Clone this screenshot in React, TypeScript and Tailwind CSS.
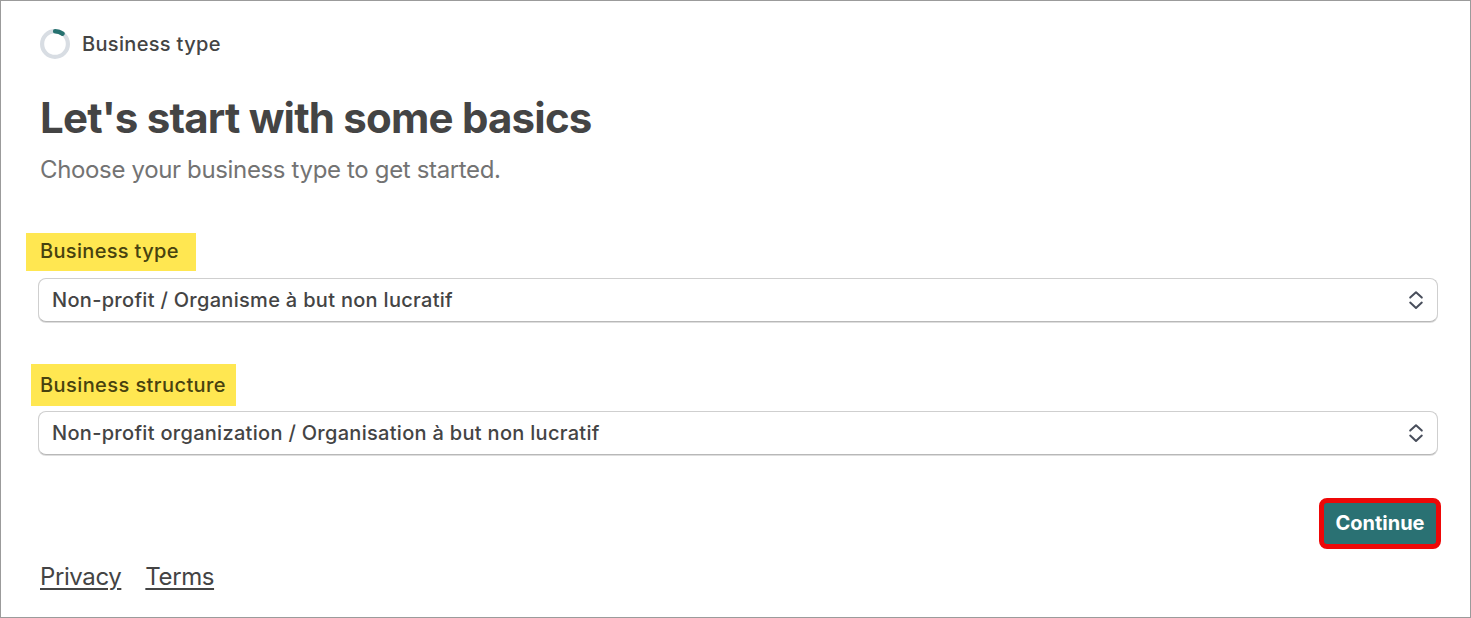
import type { ReactNode } from "react";

const ProgressRing = () => (
  <svg className="size-[30px] shrink-0" viewBox="0 0 30 30" fill="none">
    <circle cx="15" cy="15" r="12.9" stroke="#d8dde3" strokeWidth="4.2" />
    <path
      d="M15.2 2.3A13 13 0 0 1 22.4 4.6"
      stroke="#26716f"
      strokeWidth="4.6"
      strokeLinecap="round"
    />
  </svg>
);

const SelectArrows = () => (
  <svg
    className="h-[20px] w-[16px] shrink-0"
    viewBox="0 0 16 20"
    fill="none"
    stroke="#484e5b"
    strokeWidth="2"
    strokeLinecap="round"
    strokeLinejoin="round"
  >
    <path d="M2.2 7.6 8 2.2l5.8 5.4" />
    <path d="M2.2 12.6 8 18l5.8-5.4" />
  </svg>
);

const SelectBox = ({ children }: { children: ReactNode }) => (
  <button
    type="button"
    className="flex h-[44px] w-[1400px] items-center justify-between rounded-lg border border-[#cfcfcf] border-b-[#b8b8b8] bg-white pr-[13px] pb-px pl-[13px] text-left text-[20px] font-medium tracking-[0.3px] shadow-[0_1px_0_#dedede]"
  >
    {children}
    <SelectArrows />
  </button>
);

export default function App() {
  return (
    <main className="flex h-[618px] w-[1471px] flex-col border border-[#9b9b9b] bg-white pl-[39px] font-['Inter',sans-serif] text-[#444444]">
      <div className="mt-7 flex h-[30px] items-center gap-3">
        <ProgressRing />
        <span className="text-[20px] font-medium tracking-[0.33px] whitespace-nowrap">
          Business type
        </span>
      </div>

      <h1 className="mt-[33px] h-[52px] text-[42px] leading-[52px] font-bold tracking-[-0.8px] whitespace-nowrap">
        Let's start with some basics
      </h1>
      <p className="mt-[10px] h-8 text-[24px] leading-8 tracking-[-0.35px] whitespace-nowrap text-[#737373]">
        Choose your business type to get started.
      </p>

      <section className="mt-[47px] -ml-[2px]">
        <div className="-ml-[12px] flex h-[38px] w-[170px] items-center bg-[#ffe751] pb-[3px] pl-[14px] text-[20px] font-medium tracking-[0.33px] whitespace-nowrap text-[#47420f]">
          Business type
        </div>
        <div className="mt-[7px]">
          <SelectBox>Non-profit / Organisme à but non lucratif</SelectBox>
        </div>
      </section>

      <section className="mt-[42px] -ml-[2px]">
        <div className="-ml-[7px] flex h-[42px] w-[205px] items-center bg-[#ffe751] pl-[9px] text-[20px] font-medium tracking-[0.42px] whitespace-nowrap text-[#47420f]">
          Business structure
        </div>
        <div className="mt-[5px]">
          <SelectBox>
            Non-profit organization / Organisation à but non lucratif
          </SelectBox>
        </div>
      </section>

      <div className="mt-[43px] flex justify-end pr-[29px]">
        <button
          type="button"
          className="h-[51px] w-[122px] rounded-lg border-5 border-[#ee0808] bg-[#2a7173] pb-[2px] text-[20px] font-bold text-white"
        >
          Continue
        </button>
      </div>

      <footer className="mt-[12px] flex h-8 gap-6 text-[24px] leading-8 tracking-[-0.4px]">
        <a href="#privacy" className="underline decoration-2 underline-offset-3">
          Privacy
        </a>
        <a href="#terms" className="underline decoration-2 underline-offset-3">
          Terms
        </a>
      </footer>
    </main>
  );
}
